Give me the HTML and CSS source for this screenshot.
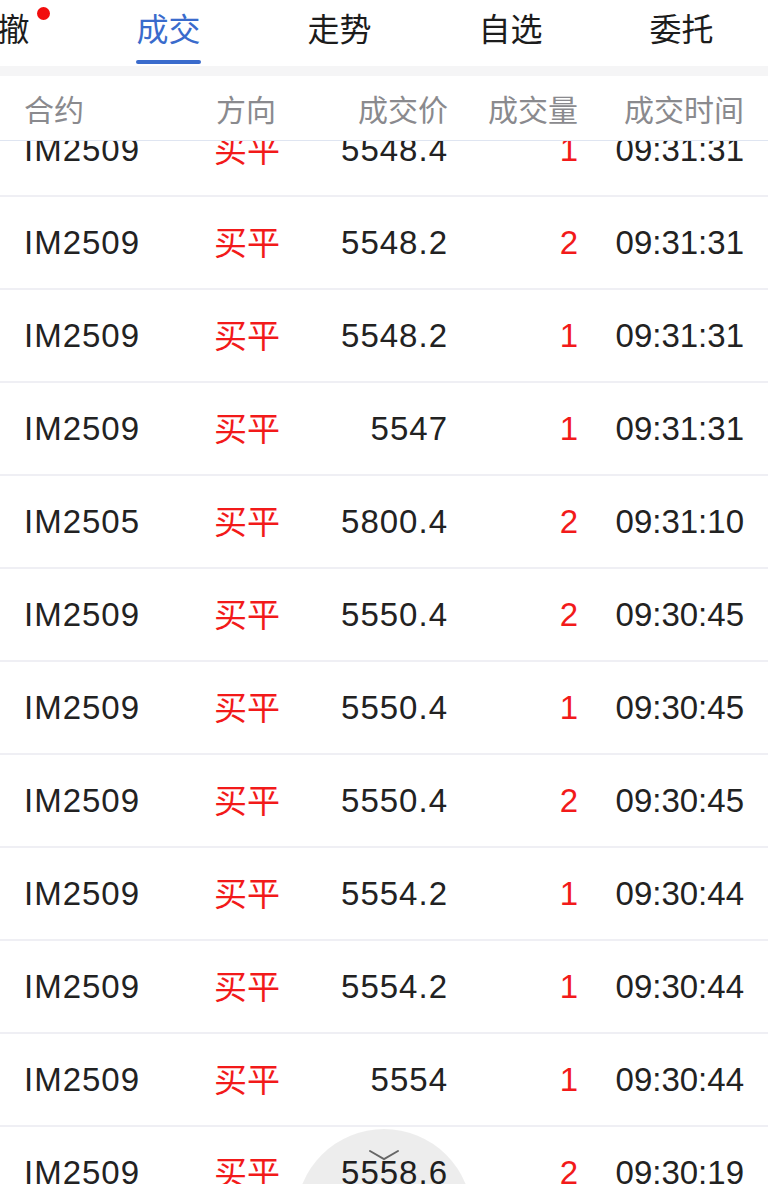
FILE: index.html
```html
<!DOCTYPE html>
<html lang="zh-CN">
<head>
    <meta charset="UTF-8">
    <meta name="viewport" content="width=device-width, initial-scale=1.0">
    <title>成交</title>
    <link rel="stylesheet" href="styles.css">
</head>
<body>

    <nav class="tabs">
        <div class="tab-strip">
            <div class="tab"><span class="tab-label">可撤<i class="dot"></i></span></div>
            <div class="tab active"><span class="tab-label">成交</span></div>
            <div class="tab"><span class="tab-label">走势</span></div>
            <div class="tab"><span class="tab-label">自选</span></div>
            <div class="tab"><span class="tab-label">委托</span></div>
        </div>
    </nav>

    <div class="gap"></div>

    <div class="table-head row-grid">
        <span>合约</span>
        <span>方向</span>
        <span class="num">成交价</span>
        <span class="num">成交量</span>
        <span class="num">成交时间</span>
    </div>

    <div class="list">
        <div class="list-inner" id="list"></div>
    </div>

    <div class="pull-btn">
        <svg width="32" height="12" viewBox="0 0 32 12"><path d="M2 2 L16 10 L30 2" fill="none" stroke="#666" stroke-width="2" stroke-linecap="round"/></svg>
    </div>

    <script>
        let trades = [
            ['IM2509', '5548.4', 1, '09:31:31'],
            ['IM2509', '5548.2', 2, '09:31:31'],
            ['IM2509', '5548.2', 1, '09:31:31'],
            ['IM2509', '5547', 1, '09:31:31'],
            ['IM2505', '5800.4', 2, '09:31:10'],
            ['IM2509', '5550.4', 2, '09:30:45'],
            ['IM2509', '5550.4', 1, '09:30:45'],
            ['IM2509', '5550.4', 2, '09:30:45'],
            ['IM2509', '5554.2', 1, '09:30:44'],
            ['IM2509', '5554.2', 1, '09:30:44'],
            ['IM2509', '5554', 1, '09:30:44'],
            ['IM2509', '5558.6', 2, '09:30:19']
        ];

        let html = '';
        trades.forEach(t => {
            html += `<div class="row row-grid">
                <span class="wide">${t[0]}</span>
                <span class="red side">买平</span>
                <span class="num wide">${t[1]}</span>
                <span class="num red">${t[2]}</span>
                <span class="num">${t[3]}</span>
            </div>`;
        });
        document.getElementById('list').innerHTML = html;
    </script>

</body>
</html>
```

FILE: styles.css
```css
* { margin: 0; padding: 0; box-sizing: border-box; }
body {
    width: 768px;
    height: 1184px;
    overflow: hidden;
    position: relative;
    background: #fff;
    color: #222;
    font-family: 'Liberation Sans', 'Noto Sans CJK SC', sans-serif;
}
.tabs { height: 66px; overflow: hidden; }
.tab-strip { display: flex; margin-left: -88px; }
.tab {
    flex: 0 0 171px;
    height: 66px;
    display: flex;
    justify-content: center;
    position: relative;
}
.tab-label {
    position: relative;
    font-size: 32px;
    line-height: 32px;
    margin-top: 14px;
    height: 52px;
    color: #1c1c1c;
}
.tab.active .tab-label { color: #3a6bcc; }
.tab.active .tab-label::after {
    content: '';
    position: absolute;
    left: 0;
    right: 0;
    bottom: 2px;
    height: 4px;
    border-radius: 2px;
    background: #3a6bcc;
}
.dot {
    position: absolute;
    top: -7px;
    right: -20px;
    width: 13px;
    height: 13px;
    border-radius: 50%;
    background: #f20d0d;
}
.gap { height: 10px; background: #f5f5f6; }
.row-grid {
    display: grid;
    grid-template-columns: 190px 86px 148px 130px 166px;
    align-items: center;
    padding: 0 24px;
}
.row-grid .num { text-align: right; }
.table-head {
    height: 65px;
    font-size: 30px;
    color: #8a8a8e;
    border-bottom: 1px solid #dfe5f1;
    position: relative;
    z-index: 2;
    background: #fff;
}
.table-head span:nth-child(2) { padding-left: 2px; }
.list { height: 1043px; overflow: hidden; }
.list-inner { margin-top: -37px; }
.row {
    height: 93px;
    font-size: 33px;
    border-bottom: 2px solid #efeff4;
}
.row .wide { letter-spacing: 1px; }
.row .side { margin-top: -4px; }
.red { color: #f21a1a; }
.pull-btn {
    position: absolute;
    left: 296px;
    top: 1129px;
    width: 176px;
    height: 176px;
    border-radius: 50%;
    background: rgba(0, 0, 0, 0.07);
    display: flex;
    justify-content: center;
    padding-top: 20px;
}
```
